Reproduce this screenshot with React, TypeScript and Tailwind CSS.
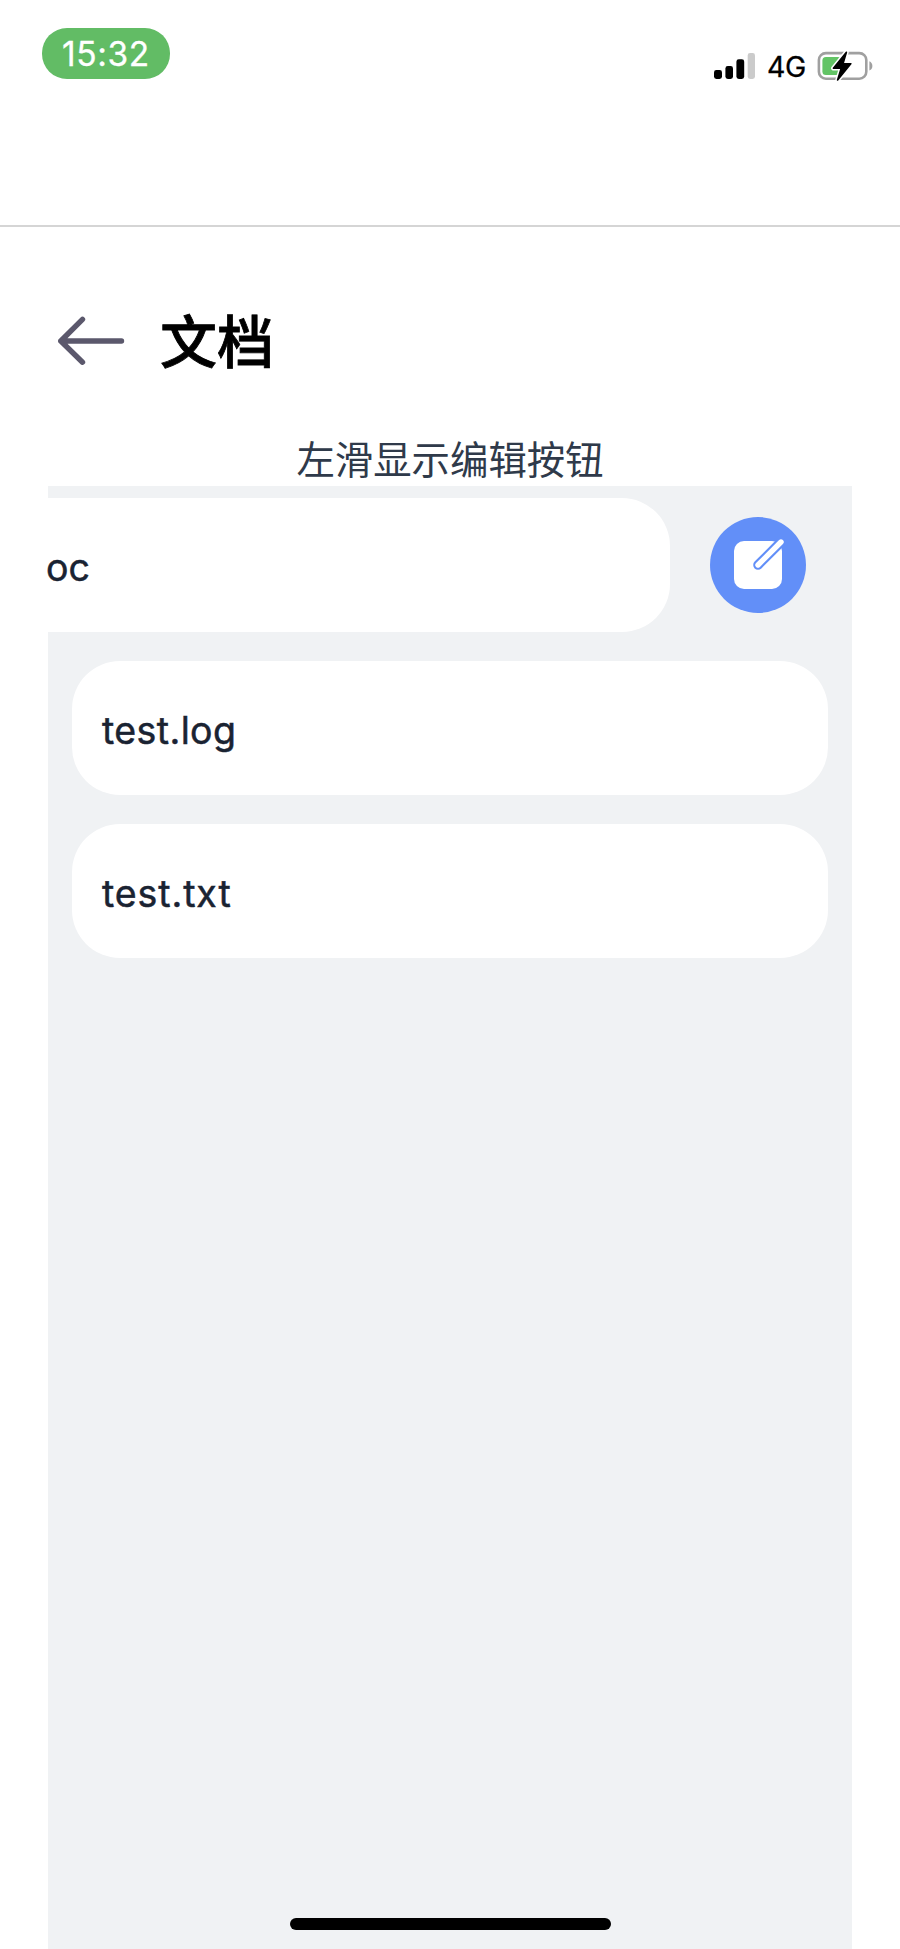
import React from "react";

function SignalBars() {
  return (
    <svg width="41" height="27" viewBox="0 0 41 27" aria-hidden="true">
      <rect x="0" y="17" width="8" height="9" rx="2.4" fill="#000" />
      <rect x="11.4" y="13" width="7.6" height="13" rx="2.4" fill="#000" />
      <rect x="22.4" y="6.3" width="7.8" height="19.7" rx="2.4" fill="#000" />
      <rect x="33.7" y="0" width="7.3" height="26" rx="2.4" fill="#cbcbcb" />
    </svg>
  );
}

function Battery() {
  return (
    <svg width="56" height="30" viewBox="0 0 56 30" aria-hidden="true">
      <rect x="1.9" y="2.1" width="47.4" height="25.6" rx="7" fill="none" stroke="#a0a0a0" strokeWidth="2.6" />
      <path d="M52.4 10.3C56.4 12 56.4 18 52.4 19.4Z" fill="#a0a0a0" />
      <rect x="5.4" y="6" width="19" height="18" rx="3.5" fill="#63c466" />
      <path
        d="M29.4 1.2L16.4 17.2H24.2L20.6 29L33.8 12.7H26Z"
        fill="#fff"
        stroke="#fff"
        strokeWidth="4.6"
        strokeLinejoin="round"
      />
      <path d="M29.4 1.2L16.4 17.2H24.2L20.6 29L33.8 12.7H26Z" fill="#000" stroke="#000" strokeWidth="1.6" strokeLinejoin="round" />
    </svg>
  );
}

function StatusBar() {
  return (
    <header className="flex h-[227px] shrink-0 items-start justify-between border-b-2 border-[#d5d5d5] pl-[42px] pr-[27px]">
      <div className="mt-[28px] flex h-[51px] w-[128px] items-center justify-center rounded-[25px] bg-[#62bc65] pt-[2px] text-[33.5px] leading-none tracking-[0.6px] text-white [-webkit-text-stroke:0.3px_white]">
        15:32
      </div>
      <div className="mt-[50px] flex items-start">
        <div className="mt-[3px]">
          <SignalBars />
        </div>
        <div className="ml-[12px] mt-[2px] w-[40px] whitespace-nowrap text-[28.5px] leading-[30px] tracking-[-0.3px] text-black [-webkit-text-stroke:0.3px_black]">4G</div>
        <div className="ml-[10px] mt-[1px]">
          <Battery />
        </div>
      </div>
    </header>
  );
}

function BackArrow() {
  return (
    <svg width="68" height="50" viewBox="0 0 68 50" fill="none" stroke="#5b586c" strokeWidth="5.4" strokeLinecap="round" strokeLinejoin="round" aria-hidden="true">
      <path d="M2.8 26H63.5M24.5 4.3L2.8 26L24.5 47.2" />
    </svg>
  );
}

function EditButton() {
  return (
    <button type="button" aria-label="编辑" className="flex size-24 shrink-0 items-center justify-center rounded-full bg-[#628ff8]">
      <svg width="54" height="54" viewBox="0 0 54 54" aria-hidden="true">
        <rect x="3" y="3" width="48" height="48" rx="10" fill="#fff" />
        <path d="M27 27L50 4" stroke="#628ff8" strokeWidth="9.6" strokeLinecap="round" />
        <path d="M27 27L50 4" stroke="#fff" strokeWidth="5.4" strokeLinecap="round" />
      </svg>
    </button>
  );
}

function FileCard({ name, className }: { name: string; className: string }) {
  return (
    <div
      className={`flex h-[134px] shrink-0 items-center bg-white pt-[6px] text-[37.5px] font-normal leading-none text-[#1a2332] [-webkit-text-stroke:0.5px_#1a2332] ${className}`}
    >
      {name}
    </div>
  );
}

export default function App() {
  return (
    <div className="relative flex h-[1949px] w-[900px] flex-col overflow-hidden bg-white font-['Inter','Noto_Sans_CJK_SC',sans-serif]">
      <StatusBar />
      <div className="flex h-[200px] shrink-0 items-start pl-[58px] pt-[88px]">
        <BackArrow />
        <h1 className="ml-[34px] text-[57px] font-medium leading-[56px] text-black [-webkit-text-stroke:0.8px_black]">文档</h1>
      </div>
      <p className="h-[59px] shrink-0 text-center font-['Noto_Sans_CJK_SC',sans-serif] text-[38.4px] font-normal leading-[60px] text-[#2f3a4a]">
        左滑显示编辑按钮
      </p>
      <main className="mx-[48px] flex flex-1 flex-col gap-[29px] bg-[#f0f2f4] pt-[12px]">
        <div className="flex h-[134px] shrink-0 items-center pr-[46px]">
          <FileCard name="oc" className="w-[622px] rounded-r-[48px] indent-[-2px]" />
          <div className="-mt-px ml-[40px]">
            <EditButton />
          </div>
        </div>
        <div className="px-6">
          <FileCard name="test.log" className="w-[756px] rounded-[48px] pl-[30px] tracking-[0.4px]" />
        </div>
        <div className="px-6">
          <FileCard name="test.txt" className="w-[756px] rounded-[48px] pl-[30px] tracking-[0.9px]" />
        </div>
      </main>
      <div className="absolute bottom-[19px] left-[290px] h-[12px] w-[321px] rounded-full bg-black" />
    </div>
  );
}
